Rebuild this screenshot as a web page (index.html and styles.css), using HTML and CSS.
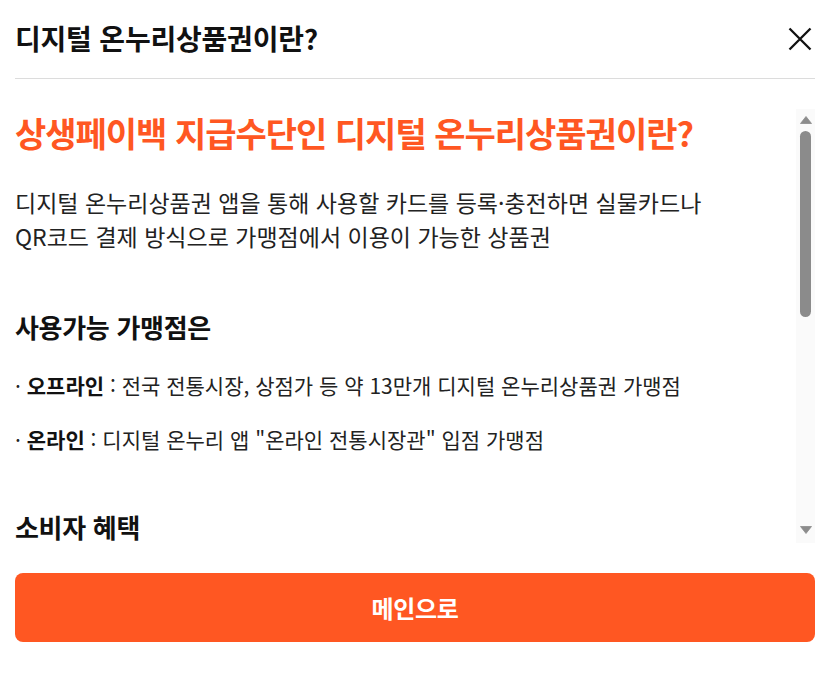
FILE: index.html
```html
<!DOCTYPE html>
<html lang="ko">
<head>
<meta charset="utf-8">
<title>디지털 온누리상품권이란?</title>
<link rel="stylesheet" href="styles.css">
</head>
<body>
<div class="modal">
  <header class="modal-header">
    <h1 class="modal-title">디지털 온누리상품권이란?</h1>
    <button class="close-btn" aria-label="닫기">
      <svg width="24" height="24" viewBox="0 0 24 24"><path d="M1.5 1.5L22.5 22.5M22.5 1.5L1.5 22.5" stroke="#111" stroke-width="2.3" fill="none"/></svg>
    </button>
  </header>
  <div class="scroll-area">
    <div class="modal-body">
      <h2 class="lead-title">상생페이백 지급수단인 디지털 온누리상품권이란?</h2>
      <p class="lead-text">디지털 온누리상품권 앱을 통해 사용할 카드를 등록·충전하면 실물카드나<br>QR코드 결제 방식으로 가맹점에서 이용이 가능한 상품권</p>
      <h3 class="section-title">사용가능 가맹점은</h3>
      <p class="item">· <b>오프라인</b> : 전국 전통시장, 상점가 등 약 13만개 디지털 온누리상품권 가맹점</p>
      <p class="item">· <b>온라인</b> : 디지털 온누리 앱 "온라인 전통시장관" 입점 가맹점</p>
      <h3 class="section-title">소비자 혜택</h3>
    </div>
    <div class="scrollbar" aria-hidden="true">
      <svg class="sb-arrow" width="12" height="8" viewBox="0 0 12 8"><path d="M6 0.5L11.5 7.5H0.5Z" fill="#8c8c8c" stroke="#8c8c8c" stroke-width="0.8" stroke-linejoin="round"/></svg>
      <div class="sb-thumb"></div>
      <div class="sb-space"></div>
      <svg class="sb-arrow" width="12" height="8" viewBox="0 0 12 8"><path d="M0.5 0.5H11.5L6 7.5Z" fill="#8c8c8c" stroke="#8c8c8c" stroke-width="0.8" stroke-linejoin="round"/></svg>
    </div>
  </div>
  <button class="main-btn">메인으로</button>
</div>
</body>
</html>
```
FILE: styles.css
```css
* { box-sizing: border-box; }
html, body { margin: 0; padding: 0; background: #fff; }
body {
  font-family: "Noto Sans CJK KR", "Noto Sans", sans-serif;
  color: #111;
}
.modal {
  width: 826px;
  height: 681px;
  padding: 0 11px 0 15px;
  display: flex;
  flex-direction: column;
}
.modal-header {
  height: 79px;
  flex: none;
  display: flex;
  align-items: center;
  justify-content: space-between;
  border-bottom: 1px solid #dcdcdc;
}
.modal-title {
  margin: 0 0 3px;
  font-size: 28px;
  font-weight: 700;
  letter-spacing: -0.2px;
  color: #111;
}
.close-btn {
  border: 0;
  background: none;
  padding: 0;
  margin-right: 3px;
  width: 24px;
  height: 24px;
  cursor: pointer;
}
.scroll-area {
  margin-top: 30px;
  height: 434px;
  flex: none;
  display: flex;
}
.modal-body {
  flex: 1;
  min-width: 0;
}
.scrollbar {
  width: 19px;
  flex: none;
  background: #fafafa;
  display: flex;
  flex-direction: column;
  align-items: center;
  padding: 7px 0 9px;
}
.sb-arrow { display: block; flex: none; }
.sb-thumb {
  width: 11px;
  height: 186px;
  margin-top: 7px;
  border-radius: 6px;
  background: #8b8b8b;
  flex: none;
}
.sb-space { flex: 1; }
.lead-title {
  margin: 4px 0 0;
  font-size: 34px;
  line-height: 40px;
  font-weight: 700;
  letter-spacing: -1px;
  color: #ff5722;
}
.lead-text {
  margin: 32px 0 0;
  font-size: 23px;
  line-height: 34px;
  letter-spacing: 0;
  color: #222;
}
.section-title {
  margin: 58px 0 0;
  font-size: 26px;
  line-height: 32px;
  font-weight: 700;
  letter-spacing: -0.3px;
  color: #111;
}
.section-title + .item { margin-top: 28px; }
.item {
  margin: 26px 0 0;
  font-size: 21px;
  line-height: 28px;
  letter-spacing: 0;
  color: #222;
}
.item b { font-weight: 700; color: #111; }
.main-btn {
  margin-top: 30px;
  height: 69px;
  flex: none;
  border: 0;
  border-radius: 8px;
  background: #ff5722;
  color: #fff;
  font-family: inherit;
  font-size: 24px;
  font-weight: 700;
  letter-spacing: -0.3px;
  cursor: pointer;
}
```
